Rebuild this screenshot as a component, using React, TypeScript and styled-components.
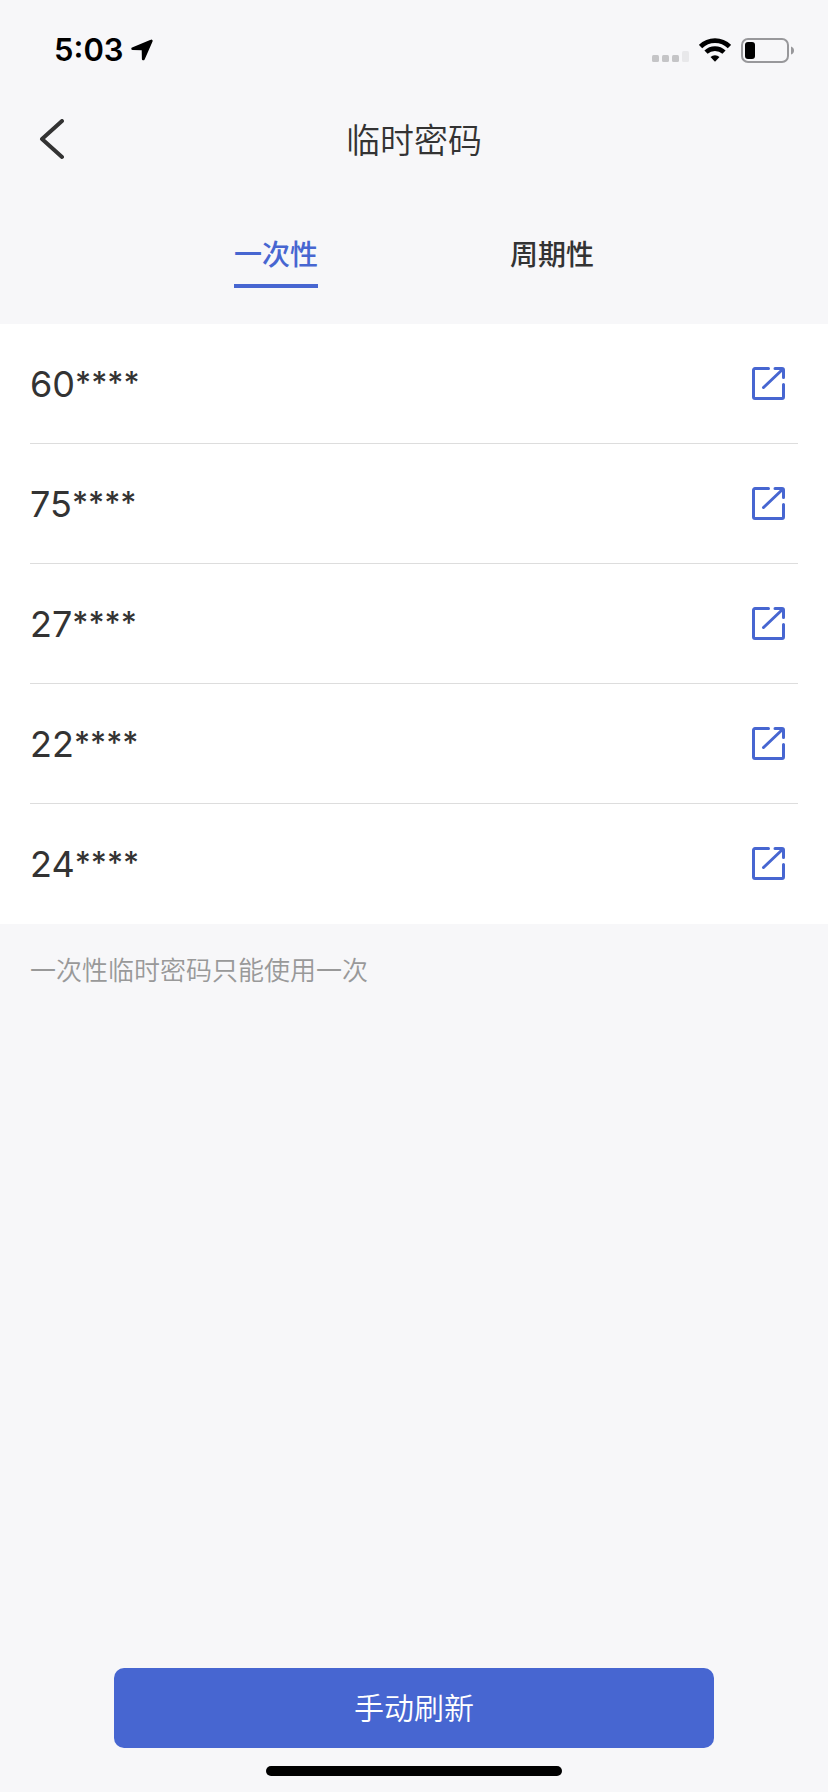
import React from 'react';
import styled, { createGlobalStyle } from 'styled-components';

const colors = {
  page: '#f7f7f9',
  surface: '#ffffff',
  text: '#333333',
  muted: '#999999',
  line: '#dddddd',
  primary: '#4766d1',
};

const GlobalStyle = createGlobalStyle`
  *, *::before, *::after { box-sizing: border-box; }
  body {
    margin: 0;
    background: ${colors.page};
    color: ${colors.text};
    font-family: Inter, "Noto Sans CJK SC", sans-serif;
  }
  button {
    margin: 0;
    padding: 0;
    border: 0;
    background: none;
    color: inherit;
    font: inherit;
    cursor: pointer;
  }
  svg { display: block; flex: none; }
`;

const Screen = styled.div`
  display: flex;
  flex-direction: column;
  min-height: 100vh;
`;

const StatusBar = styled.div`
  display: flex;
  align-items: center;
  justify-content: space-between;
  height: 88px;
  padding: 12px 34px 0 54px;
  color: #000000;
`;

const StatusGroup = styled.div<{ $gap: number }>`
  display: flex;
  align-items: center;
  gap: ${({ $gap }) => $gap}px;
`;

const Clock = styled.time`
  font-size: 31px;
  line-height: 36px;
  font-weight: 600;
`;

const NavBar = styled.header`
  display: grid;
  grid-template-columns: 80px 1fr 80px;
  align-items: center;
  height: 104px;
`;

const BackButton = styled.button`
  display: flex;
  align-items: center;
  height: 80px;
  padding-left: 38px;
`;

const Title = styled.h1`
  margin: 0;
  padding-top: 2px;
  font-size: 34px;
  line-height: 48px;
  font-weight: 350;
  text-align: center;
`;

const Tabs = styled.div`
  display: flex;
  height: 132px;
  padding: 40px 16.6667% 0;
`;

const TabCell = styled.div`
  display: flex;
  flex: 1;
  align-items: flex-start;
  justify-content: center;
`;

const Tab = styled.button<{ $active: boolean }>`
  height: 56px;
  padding-bottom: 6px;
  border-bottom: 4px solid ${({ $active }) => ($active ? colors.primary : 'transparent')};
  color: ${({ $active }) => ($active ? colors.primary : colors.text)};
  font-size: 28px;
  line-height: 46px;
  font-weight: 500;
`;

const CodeList = styled.ul`
  margin: 0;
  padding: 0 30px;
  list-style: none;
  background: ${colors.surface};
`;

const CodeRow = styled.li`
  display: flex;
  align-items: center;
  justify-content: space-between;
  height: 120px;
  padding-right: 12px;
  border-bottom: 1px solid ${colors.line};

  &:last-child { border-bottom-color: transparent; }
`;

const Code = styled.span`
  display: flex;
  align-items: flex-start;
  font-size: 36px;
  line-height: 48px;
`;

const Mask = styled.span`
  font-size: 31px;
  line-height: 46px;
  font-weight: 500;
`;

const ShareButton = styled.button`
  color: ${colors.primary};
`;

const Hint = styled.p`
  margin: 0;
  padding: 27px 30px;
  color: ${colors.muted};
  font-size: 26px;
  line-height: 40px;
  font-weight: 350;
`;

const Footer = styled.footer`
  display: flex;
  flex-direction: column;
  align-items: center;
  gap: 18px;
  margin-top: auto;
  padding-bottom: 16px;
`;

const RefreshButton = styled.button`
  width: calc(100% - 228px);
  height: 80px;
  border-radius: 10px;
  background: ${colors.primary};
  color: #ffffff;
  font-size: 30px;
  line-height: 44px;
  font-weight: 350;
`;

const HomeIndicator = styled.div`
  width: 296px;
  height: 10px;
  border-radius: 5px;
  background: #000000;
`;

const LocationIcon = () => (
  <svg width="22" height="22" viewBox="0 0 22 22" aria-hidden="true">
    <path
      d="M20 1.400 1.400 9.200c-.5.300-.4.900.200.900l9.400.3c.4 0 .5.200.5.500l.2 9c0 .7.800.900 1.200.200L20.800 2.200c.3-.6-.2-1.100-.8-.8Z"
      fill="currentColor"
      stroke="currentColor"
      strokeWidth="1.600"
      strokeLinejoin="round"
    />
  </svg>
);

const SignalIcon = () => (
  <svg width="37" height="24" viewBox="0 0 37 24" aria-hidden="true">
    <g fill="#c5c5c7">
      <rect x="0" y="17" width="7" height="7" rx="1.500" />
      <rect x="10" y="17" width="7" height="7" rx="1.500" />
      <rect x="20" y="17" width="7" height="7" rx="1.500" />
    </g>
    <rect x="30" y="13" width="7" height="11" rx="1.500" fill="#e8e8ea" />
  </svg>
);

const WifiIcon = () => (
  <svg width="32" height="24" viewBox="0 0 32 24" aria-hidden="true">
    <g fill="none" stroke="currentColor" strokeWidth="4.600">
      <path d="M1.600 8.500a20.500 20.500 0 0 1 28.800 0" />
      <path d="M7 14.200a13 13 0 0 1 18 0" />
    </g>
    <path d="M11.500 19a6.600 6.600 0 0 1 9 0L16 23.700Z" fill="currentColor" />
  </svg>
);

const BatteryIcon = () => (
  <svg width="53" height="25" viewBox="0 0 53 25" aria-hidden="true">
    <rect x="1" y="1" width="46" height="23" rx="6" fill="none" stroke="#98989b" strokeWidth="2" />
    <rect x="4" y="4" width="10" height="17" rx="3" fill="currentColor" />
    <path d="M50 8.500q3 1 3 4t-3 4Z" fill="#98989b" />
  </svg>
);

const BackIcon = () => (
  <svg width="28" height="42" viewBox="0 0 28 42" aria-hidden="true">
    <path
      d="M24 2 4 20l20 18"
      fill="none"
      stroke="currentColor"
      strokeWidth="4"
      strokeLinecap="round"
      strokeLinejoin="round"
    />
  </svg>
);

const ShareIcon = () => (
  <svg width="34" height="34" viewBox="0 0 34 34" aria-hidden="true">
    <g fill="none" stroke="currentColor" strokeWidth="3" strokeLinecap="round" strokeLinejoin="round">
      <path d="M16.500 1.500H3A1.500 1.500 0 0 0 1.500 3v27A1.500 1.500 0 0 0 3 31.500h27a1.500 1.500 0 0 0 1.500-1.500V17.500" />
      <path d="M23 1.500h7A1.500 1.500 0 0 1 31.500 3v7.500M31 2 11.500 20.500" />
    </g>
  </svg>
);

const codes = ['60', '75', '27', '22', '24'];

export default function App() {
  const [active, setActive] = React.useState(0);

  return (
    <>
      <GlobalStyle />
      <Screen>
        <StatusBar>
          <StatusGroup $gap={7}>
            <Clock>5:03</Clock>
            <LocationIcon />
          </StatusGroup>
          <StatusGroup $gap={10}>
            <SignalIcon />
            <WifiIcon />
            <BatteryIcon />
          </StatusGroup>
        </StatusBar>
        <NavBar>
          <BackButton type="button" aria-label="返回">
            <BackIcon />
          </BackButton>
          <Title>临时密码</Title>
        </NavBar>
        <Tabs role="tablist">
          {['一次性', '周期性'].map((label, index) => (
            <TabCell key={label} role="presentation">
              <Tab
                type="button"
                role="tab"
                aria-selected={active === index}
                $active={active === index}
                onClick={() => setActive(index)}
              >
                {label}
              </Tab>
            </TabCell>
          ))}
        </Tabs>
        <main>
          <CodeList>
            {codes.map((code) => (
              <CodeRow key={code}>
                <Code>
                  {code}
                  <Mask>****</Mask>
                </Code>
                <ShareButton type="button" aria-label={`分享 ${code}****`}>
                  <ShareIcon />
                </ShareButton>
              </CodeRow>
            ))}
          </CodeList>
          <Hint>一次性临时密码只能使用一次</Hint>
        </main>
        <Footer>
          <RefreshButton type="button">手动刷新</RefreshButton>
          <HomeIndicator />
        </Footer>
      </Screen>
    </>
  );
}
